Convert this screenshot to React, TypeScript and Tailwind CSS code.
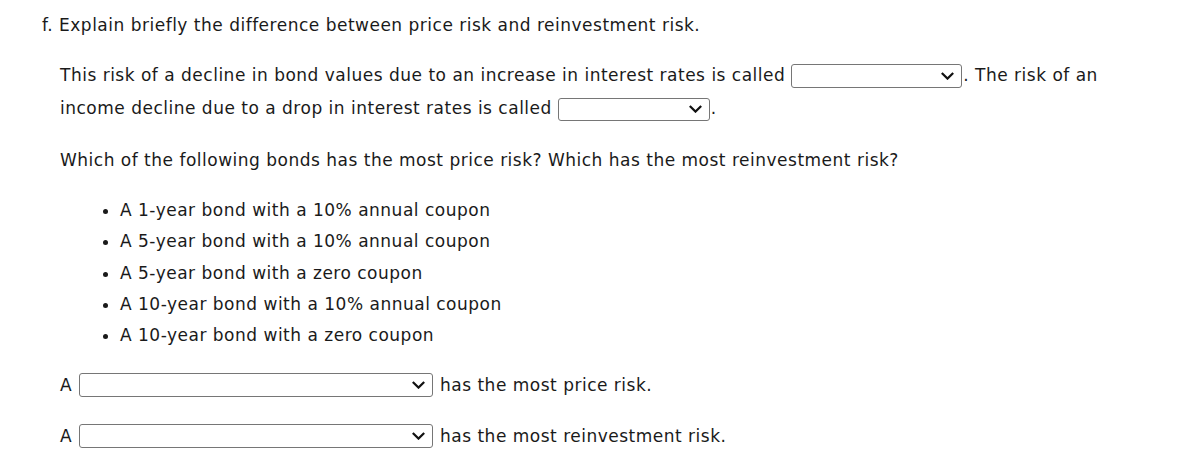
import React from 'react';

const BONDS = [
  'A 1-year bond with a 10% annual coupon',
  'A 5-year bond with a 10% annual coupon',
  'A 5-year bond with a zero coupon',
  'A 10-year bond with a 10% annual coupon',
  'A 10-year bond with a zero coupon',
];

function Chevron() {
  return (
    <svg width="13" height="8" viewBox="0 0 13 8" className="shrink-0">
      <path d="M0.8 1 L6.5 6.6 L12.2 1" fill="none" stroke="#111" strokeWidth="2.2" />
    </svg>
  );
}

// Looks like an empty native <select>: grey border, rounded corners, chevron on the right.
function Dropdown({ width, height = 24 }: { width: number; height?: number }) {
  return (
    <span
      className="inline-flex items-center justify-end rounded-[3px] border border-[#767676] bg-white pr-[7px] align-middle"
      style={{ width, height }}
    >
      <Chevron />
    </span>
  );
}

export default function App() {
  return (
    <div className="min-h-[465px] w-[1188px] bg-white pl-[42px] pt-[9px] text-[17px] tracking-[0.5px] text-[#1a1a1a] font-['Verdana','DejaVu_Sans',sans-serif]">
      <p className="leading-[33px]">f. Explain briefly the difference between price risk and reinvestment risk.</p>

      <div className="ml-[18px]">
        <p className="mt-[17px] leading-[33px]">
          This risk of a decline in bond values due to an increase in interest rates is called{' '}
          <Dropdown width={171} />
          <span className="ml-[1px]">. The risk of an</span>
          <br />
          income decline due to a drop in interest rates is called <Dropdown width={152} height={23} />
          <span className="ml-[1px]">.</span>
        </p>

        <p className="mt-[19px] leading-[33px]">
          Which of the following bonds has the most price risk? Which has the most reinvestment risk?
        </p>

        <ul className="mt-[18px] ml-[42px] list-disc pl-[18px]">
          {BONDS.map((b) => (
            <li key={b} className="leading-[31.25px]">
              {b}
            </li>
          ))}
        </ul>

        <div className="mt-[22px] flex flex-col gap-[27px]">
          {['has the most price risk.', 'has the most reinvestment risk.'].map((t) => (
            <div key={t} className="flex h-[24px] items-center">
              <span className="w-[19px]">A</span>
              <Dropdown width={354} />
              <span className="ml-[7px]">{t}</span>
            </div>
          ))}
        </div>
      </div>
    </div>
  );
}
